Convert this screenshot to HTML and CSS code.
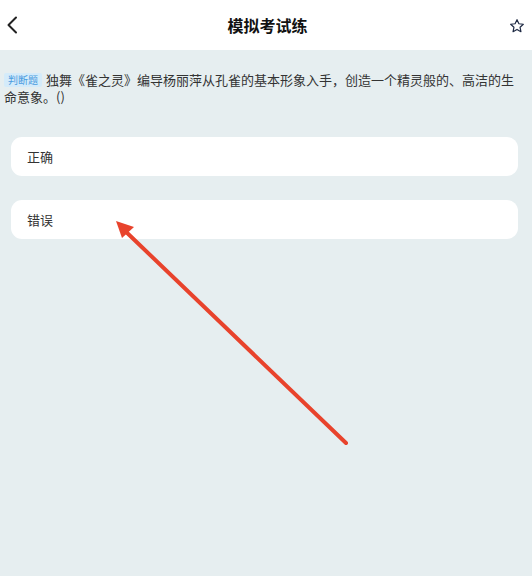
FILE: index.html
```html
<!DOCTYPE html>
<html lang="zh">
<head>
<meta charset="utf-8">
<link rel="stylesheet" href="styles.css">
</head>
<body>
<div class="page">
  <header class="nav">
    <svg class="back" width="12" height="18" viewBox="0 0 12 18"><path d="M10 1.5 L2.5 9 L10 16.5" fill="none" stroke="#222" stroke-width="2" stroke-linecap="round" stroke-linejoin="round"/></svg>
    <h1 class="title">模拟考试练</h1>
    <svg class="star" width="16" height="16" viewBox="0 0 24 24"><path d="M12 2.5 L14.9 8.6 L21.5 9.4 L16.6 13.9 L17.9 20.5 L12 17.2 L6.1 20.5 L7.4 13.9 L2.5 9.4 L9.1 8.6 Z" fill="none" stroke="#1f2a44" stroke-width="1.8" stroke-linejoin="round"/></svg>
  </header>
  <main class="content">
    <p class="question"><span class="badge">判断题</span>独舞《雀之灵》编导杨丽萍从孔雀的基本形象入手，创造一个精灵般的、高洁的生命意象。()</p>
    <div class="options">
      <div class="option">正确</div>
      <div class="option">错误</div>
    </div>
  </main>
  <svg class="arrow" width="532" height="576" viewBox="0 0 532 576">
    <line x1="346" y1="443" x2="122" y2="228" stroke="#e8432c" stroke-width="4" stroke-linecap="round"/>
    <polygon points="116,221 134,227 122,238" fill="#e8432c"/>
  </svg>
</div>
</body>
</html>
```

FILE: styles.css
```css
* { box-sizing: border-box; margin: 0; padding: 0; }
html, body { width: 532px; height: 576px; overflow: hidden; }
body {
  background: #e6eef0;
  font-family: "Noto Sans CJK SC", "Noto Sans", sans-serif;
  color: #333;
}
.page { position: relative; width: 532px; height: 576px; }
.nav {
  height: 50px;
  background: #fff;
  display: flex;
  align-items: center;
  justify-content: space-between;
  padding: 0 7px 0 6px;
}
.back { display: block; }
.title {
  font-size: 16px;
  font-weight: 700;
  color: #111;
  line-height: 1;
  margin-left: 8px;
}
.star { display: block; margin-top: 1px; }
.content { padding: 21px 0 0 0; }
.question {
  font-size: 13px;
  line-height: 17px;
  color: #333;
  padding: 0 14px 0 4px;
}
.badge {
  display: inline-block;
  background: #d4ebfa;
  color: #4a9be0;
  font-size: 10px;
  line-height: 14px;
  padding: 0 4px;
  border-radius: 2px;
  margin-right: 4px;
  vertical-align: 1px;
}
.options {
  display: flex;
  flex-direction: column;
  gap: 24px;
  padding: 32px 14px 0 11px;
}
.option {
  background: #fff;
  border-radius: 11px;
  height: 39px;
  display: flex;
  align-items: center;
  padding-left: 16px;
  font-size: 13px;
  color: #333;
}
.arrow { position: absolute; left: 0; top: 0; pointer-events: none; }
```
